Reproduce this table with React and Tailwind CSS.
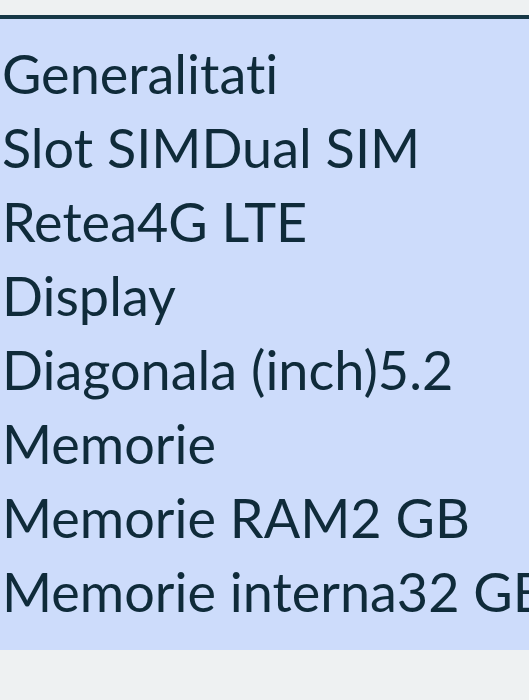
const rows = [
  'Generalitati',
  'Slot SIMDual SIM',
  'Retea4G LTE',
  'Display',
  'Diagonala (inch)5.2',
  'Memorie',
  'Memorie RAM2 GB',
  'Memorie interna32 GB',
];

export default function App() {
  return (
    <div className="min-h-[700px] bg-[#eef1f2] overflow-hidden">
      <div className="h-[15px]" />
      <div className="border-t-[4px] border-[#163847] bg-[#cddcfb] pt-[18px] pb-[21px]">
        {rows.map((r) => (
          <div
            key={r}
            className="pl-[2px] whitespace-nowrap text-[54px] leading-[74px] text-[#0f2b3a] font-['Lato',sans-serif] [font-variant-ligatures:none]"
          >
            {r}
          </div>
        ))}
      </div>
    </div>
  );
}
